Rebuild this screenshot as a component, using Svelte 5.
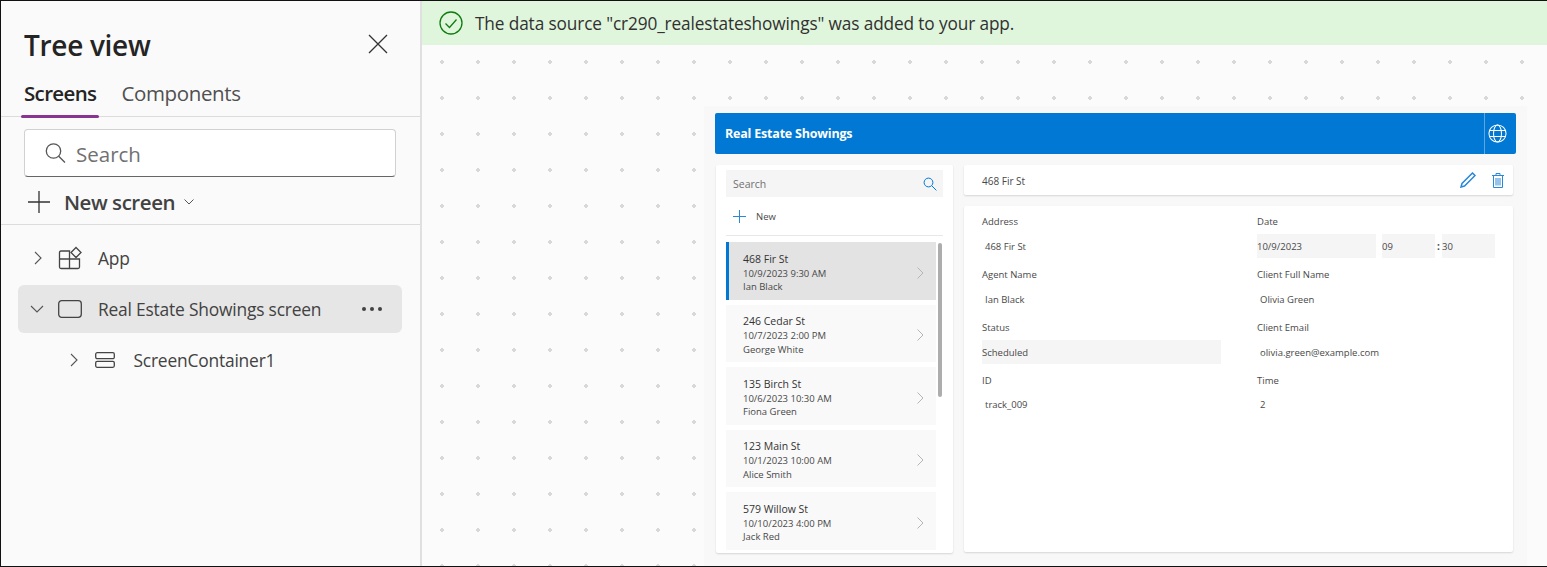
<script>
  const showings = [
    { address: '468 Fir St', when: '10/9/2023 9:30 AM', agent: 'Ian Black', selected: true },
    { address: '246 Cedar St', when: '10/7/2023 2:00 PM', agent: 'George White' },
    { address: '135 Birch St', when: '10/6/2023 10:30 AM', agent: 'Fiona Green' },
    { address: '123 Main St', when: '10/1/2023 10:00 AM', agent: 'Alice Smith' },
    { address: '579 Willow St', when: '10/10/2023 4:00 PM', agent: 'Jack Red' }
  ];
</script>

<div class="frame">
  <aside class="tree">
    <div class="tree-head">
      <h1>Tree view</h1>
      <svg class="close" width="20" height="20" viewBox="0 0 20 20"><path d="M1 1L19 19M19 1L1 19" stroke="#333" stroke-width="1.3" fill="none" /></svg>
    </div>
    <div class="tabs">
      <span class="tab active">Screens</span>
      <span class="tab">Components</span>
    </div>
    <div class="search">
      <svg width="22" height="22" viewBox="0 0 22 22" fill="none" stroke="#555" stroke-width="1.3"><circle cx="9.5" cy="9" r="7.2" /><path d="M14.7 14.2L21 20.5" /></svg>
      <span>Search</span>
    </div>
    <div class="new-screen">
      <svg width="24" height="24" viewBox="0 0 24 24"><path d="M12 1V23M1 12H23" stroke="#333" stroke-width="1.3" fill="none" /></svg>
      <b>New screen</b>
      <svg width="10" height="6" viewBox="0 0 10 6"><path d="M.5 .5L5 5L9.5 .5" stroke="#555" fill="none" /></svg>
    </div>
    <div class="nodes">
      <div class="node">
        <svg class="chev" width="8" height="14" viewBox="0 0 8 14"><path d="M1 1L7 7L1 13" stroke="#555" stroke-width="1.1" fill="none" /></svg>
        <svg class="glyph" width="24" height="24" viewBox="0 0 24 24" fill="none" stroke="#444" stroke-width="1.3"><path d="M11.5 5H3Q1.5 5 1.5 6.5V21Q1.5 22.5 3 22.5H20Q21.5 22.5 21.5 21V13H11.5ZM11.5 13H1.5M11.5 13V22.5" /><path d="M18 1.5L23 6.5L18 11.5L13 6.5Z" /></svg>
        <span>App</span>
      </div>
      <div class="node current">
        <svg class="chev" width="14" height="8" viewBox="0 0 14 8"><path d="M1 1L7 7L13 1" stroke="#555" stroke-width="1.1" fill="none" /></svg>
        <svg class="glyph" width="24" height="18" viewBox="0 0 24 18"><rect x=".7" y=".7" width="22.6" height="16.6" rx="3" stroke="#444" stroke-width="1.3" fill="none" /></svg>
        <span>Real Estate Showings screen</span>
        <i class="dots"></i>
      </div>
      <div class="node child">
        <svg class="chev" width="8" height="14" viewBox="0 0 8 14"><path d="M1 1L7 7L1 13" stroke="#555" stroke-width="1.1" fill="none" /></svg>
        <svg class="glyph" width="20" height="16" viewBox="0 0 20 16" fill="none" stroke="#444" stroke-width="1.3"><rect x=".7" y=".7" width="18.6" height="6" rx="1.5" /><rect x=".7" y="9.3" width="18.6" height="6" rx="1.5" /></svg>
        <span>ScreenContainer1</span>
      </div>
    </div>
  </aside>

  <main class="stage">
    <div class="banner">
      <svg width="24" height="24" viewBox="0 0 24 24" fill="none" stroke="#107c10" stroke-width="1.3"><circle cx="12" cy="12" r="11" /><path d="M6.5 12.5L10.5 16.5L17.5 8.5" /></svg>
      <span>The data source "cr290_realestateshowings" was added to your app.</span>
    </div>
    <div class="canvas">
      <section class="preview">
        <header class="app-bar">
          <strong>Real Estate Showings</strong>
          <div class="globe">
            <svg width="19" height="19" viewBox="0 0 20 20" fill="none" stroke="#fff" stroke-width="1.1"><circle cx="10" cy="10" r="9" /><ellipse cx="10" cy="10" rx="4.2" ry="9" /><path d="M1.6 6.8H18.4M1.6 13.2H18.4" /></svg>
          </div>
        </header>
        <div class="columns">
          <div class="list-card">
            <div class="list-search">
              <span>Search</span>
              <svg width="14" height="14" viewBox="0 0 14 14" fill="none" stroke="#0078d4" stroke-width="1"><circle cx="5.5" cy="5.5" r="4.4" /><path d="M8.8 8.8L13.4 13.4" /></svg>
            </div>
            <div class="list-new">
              <svg width="13" height="13" viewBox="0 0 13 13"><path d="M6.5 0V13M0 6.5H13" stroke="#2b88d8" stroke-width="1" fill="none" /></svg>
              <span>New</span>
            </div>
            <div class="rows">
              {#each showings as s}
                <div class="row" class:selected={s.selected}>
                  <div class="row-text">
                    <div class="addr">{s.address}</div>
                    <div>{s.when}</div>
                    <div>{s.agent}</div>
                  </div>
                  <svg width="7" height="12" viewBox="0 0 7 12"><path d="M.5 .5L6 6L.5 11.5" stroke="#b5b5b5" fill="none" /></svg>
                </div>
              {/each}
              <i class="thumb"></i>
            </div>
          </div>
          <div class="detail">
            <div class="detail-bar">
              <span>468 Fir St</span>
              <svg class="edit" width="16" height="16" viewBox="0 0 16 16" fill="none" stroke="#2b88d8"><path d="M1 15L2 11.5L12.5 1L15 3.5L4.5 14Z" stroke-width="1.5" /></svg>
              <svg width="12" height="15" viewBox="0 0 12 15" fill="none" stroke="#2b88d8" stroke-width="1"><path d="M0 2.5H12M4 2.5V.5H8V2.5M1.5 2.5V14.5H10.5V2.5M4 5V12.5M6 5V12.5M8 5V12.5" /></svg>
            </div>
            <div class="form">
              <div class="field">
                <label>Address</label>
                <div class="value">468 Fir St</div>
              </div>
              <div class="field">
                <label>Date</label>
                <div class="date-row">
                  <div class="input date">10/9/2023</div>
                  <div class="input hour">09</div>
                  <b>:</b>
                  <div class="input minute">30</div>
                </div>
              </div>
              <div class="field">
                <label>Agent Name</label>
                <div class="value">Ian Black</div>
              </div>
              <div class="field">
                <label>Client Full Name</label>
                <div class="value">Olivia Green</div>
              </div>
              <div class="field">
                <label>Status</label>
                <div class="input status">Scheduled</div>
              </div>
              <div class="field">
                <label>Client Email</label>
                <div class="value">olivia.green@example.com</div>
              </div>
              <div class="field">
                <label>ID</label>
                <div class="value">track_009</div>
              </div>
              <div class="field">
                <label>Time</label>
                <div class="value">2</div>
              </div>
            </div>
          </div>
        </div>
      </section>
    </div>
  </main>
</div>

<style>
  :global(body) { margin: 0; }

  .frame {
    width: 1547px;
    height: 567px;
    box-sizing: border-box;
    border: 1px solid #111;
    border-right: 0;
    display: flex;
    overflow: hidden;
    font-family: "Open Sans", "Noto Sans", sans-serif;
    color: #333;
    background: #fafafa;
  }

  /* tree panel */
  .tree {
    width: 419px;
    flex: none;
    background: #fafafa;
    box-sizing: border-box;
  }
  .tree-head {
    display: flex;
    align-items: center;
    justify-content: space-between;
    height: 61px;
    padding: 27px 32px 0 23px;
    box-sizing: border-box;
  }
  .close { margin-top: -2px; }
  h1 {
    margin: 0;
    font-size: 28px;
    font-weight: 600;
    color: #242424;
    letter-spacing: -0.3px;
  }
  .tabs {
    display: flex;
    gap: 25px;
    padding-left: 23px;
    height: 55px;
    box-sizing: border-box;
    border-bottom: 1px solid #dcdcdc;
    align-items: flex-start;
    padding-top: 17px;
    font-size: 20.5px;
  }
  .tab { color: #505050; letter-spacing: -0.35px; line-height: 28px; }
  .tab.active {
    color: #242424;
    font-weight: 600;
    letter-spacing: -0.65px;
    position: relative;
  }
  .tab.active::after {
    content: '';
    position: absolute;
    left: -3px;
    right: -3px;
    top: 36px;
    height: 3px;
    border-radius: 2px;
    background: #8a3391;
  }
  .search {
    margin: 12px 24px 0 23px;
    width: 372px;
    height: 48px;
    box-sizing: border-box;
    background: #fff;
    border: 1px solid #d1d1d1;
    border-bottom-color: #666;
    border-radius: 4px;
    display: flex;
    align-items: center;
    gap: 10px;
    padding-left: 19px;
    font-size: 20.5px;
    color: #707070;
  }
  .search span { padding-top: 2px; }
  .new-screen {
    height: 48px;
    padding-left: 26px;
    padding-top: 2px;
    display: flex;
    align-items: center;
    border-bottom: 1px solid #dcdcdc;
    box-sizing: border-box;
    font-size: 20.5px;
    color: #424242;
  }
  .new-screen b { font-weight: 600; margin: 0 9px 0 13px; letter-spacing: -0.45px; }
  .nodes {
    padding: 9px 18px 0 17px;
    font-size: 17.4px;
    color: #424242;
  }
  .node {
    height: 48px;
    margin-bottom: 3px;
    display: flex;
    align-items: center;
    position: relative;
    border-radius: 6px;
    letter-spacing: -0.2px;
  }
  .node span { position: absolute; left: 80px; }
  .node .chev { position: absolute; left: 16px; }
  .node .glyph { position: absolute; left: 40px; }
  .node.current { background: #e6e6e6; }
  .node.current .chev { left: 12px; }
  .node.child .chev { left: 52px; }
  .node.child .glyph { left: 77px; }
  .node.child span { left: 115.5px; }
  .dots {
    position: absolute;
    right: 28px;
    top: 22px;
    width: 4px;
    height: 4px;
    border-radius: 50%;
    background: #424242;
    box-shadow: 8px 0 #424242, -8px 0 #424242;
  }

  /* stage */
  .stage {
    flex: 1;
    display: flex;
    flex-direction: column;
    border-left: 2px solid #e0e0e0;
    min-width: 0;
  }
  .banner {
    height: 44px;
    flex: none;
    background: #dff6dd;
    display: flex;
    align-items: center;
    gap: 12px;
    padding-left: 17px;
    font-size: 17.25px;
    color: #323130;
    letter-spacing: -0.13px;
  }
  .canvas {
    flex: 1;
    position: relative;
    background-color: #fbfbfb;
    background-image: radial-gradient(circle, #d8d8d8 1.6px, transparent 2px);
    background-size: 36px 36px;
    background-position: 2px -1px;
  }
  .preview {
    position: absolute;
    left: 282px;
    top: 61px;
    width: 823px;
    height: 470px;
    background: #f8f8f8;
    padding: 7px 11px 0 11px;
    box-sizing: border-box;
    font-size: 9.5px;
    color: #484848;
  }
  .app-bar {
    height: 41px;
    background: #0078d4;
    border-radius: 2px;
    color: #fff;
    display: flex;
    align-items: center;
    padding-left: 10px;
    font-size: 12.5px;
  }
  .app-bar strong { flex: 1; font-weight: 700; letter-spacing: -0.2px; }
  .globe {
    width: 32px;
    height: 100%;
    box-sizing: border-box;
    border-left: 1px solid #5aa7e2;
    padding-left: 3px;
    display: flex;
    align-items: center;
  }
  .columns {
    display: flex;
    gap: 11px;
    margin-top: 11px;
    padding-left: 1px;
  }
  .list-card {
    width: 237px;
    height: 388px;
    background: #fff;
    box-shadow: 0 1px 2px rgba(0,0,0,.14);
    border-radius: 2px;
    padding: 5px 10px 0;
    box-sizing: border-box;
    display: flex;
    flex-direction: column;
  }
  .list-search {
    height: 27px;
    flex: none;
    background: #f5f5f5;
    display: flex;
    align-items: center;
    justify-content: space-between;
    padding: 0 6px 0 7px;
    font-size: 10.5px;
    color: #707070;
  }
  .list-new {
    height: 38px;
    flex: none;
    display: flex;
    align-items: center;
    gap: 10px;
    padding-left: 7px;
    border-bottom: 1px solid #e8e8e8;
    box-sizing: content-box;
  }
  .rows {
    position: relative;
    margin-top: 6px;
    width: 217px;
    height: 311px;
    overflow: hidden;
  }
  .row {
    width: 210px;
    height: 57.5px;
    margin-bottom: 5px;
    background: #f9f9f9;
    box-sizing: border-box;
    padding: 4px 12px 0 17px;
    display: flex;
    align-items: center;
    justify-content: space-between;
    line-height: 13.5px;
  }
  .row.selected {
    background: #e3e3e3;
    border-left: 3px solid #0078d4;
    padding-left: 14px;
  }
  .addr { font-size: 10.5px; color: #333; line-height: 15px; }
  .thumb {
    position: absolute;
    left: 212px;
    top: 1px;
    width: 4px;
    height: 154px;
    border-radius: 2px;
    background: #adadad;
  }
  .detail {
    width: 549px;
    display: flex;
    flex-direction: column;
    gap: 11px;
  }
  .detail-bar, .form {
    background: #fff;
    box-shadow: 0 1px 2px rgba(0,0,0,.14);
    border-radius: 2px;
  }
  .detail-bar {
    height: 30px;
    display: flex;
    align-items: center;
    padding: 0 9px 0 18px;
    font-size: 10px;
    flex: none;
  }
  .detail-bar span { flex: 1; padding-top: 1px; }
  .edit { margin-right: 16px; }
  .form {
    height: 346px;
    box-sizing: border-box;
    padding: 9px 18px 0;
    display: grid;
    grid-template-columns: 275px 1fr;
    grid-auto-rows: 53px;
    align-content: start;
  }
  .field { display: flex; flex-direction: column; }
  label { line-height: 13px; display: block; margin-bottom: 6px; }
  .value { height: 24px; line-height: 26px; padding-left: 3px; }
  .field:nth-last-child(-n+2) .value { line-height: 24px; }
  .input {
    height: 24px;
    line-height: 26px;
    background: #f5f5f5;
  }
  .status { width: 239px; }
  .date-row { display: flex; align-items: center; }
  .date { width: 119px; }
  .hour { width: 53px; margin-left: 6px; }
  .date-row b { width: 7px; text-align: center; font-size: 10px; }
  .minute { width: 53px; }
</style>
